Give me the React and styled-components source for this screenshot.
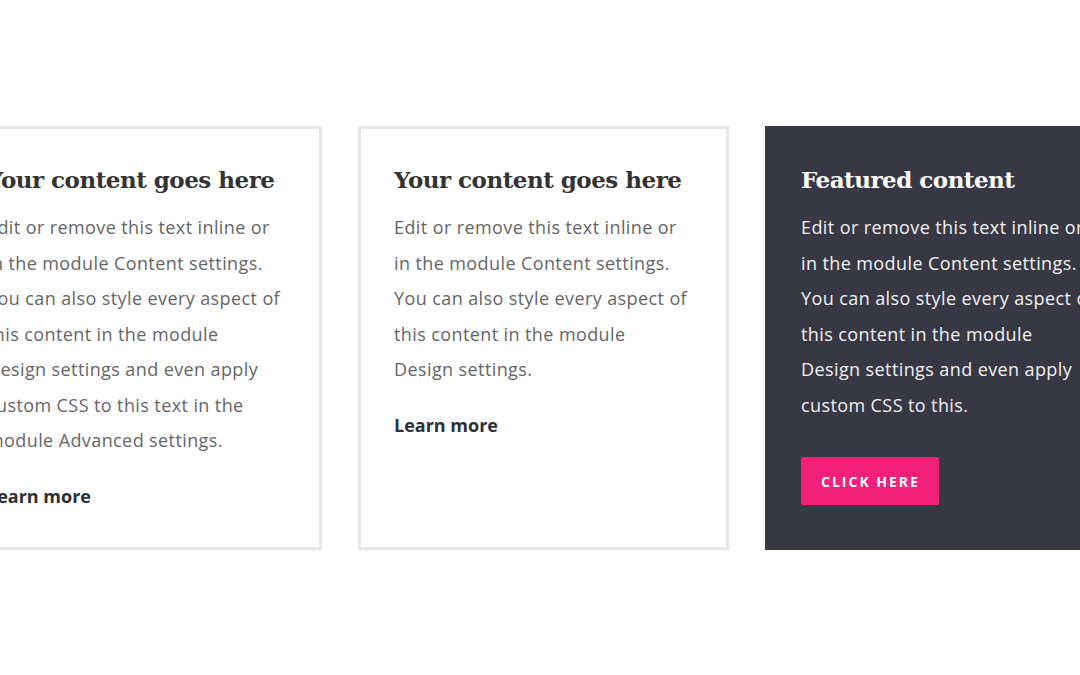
import React from "react";
import styled, { createGlobalStyle } from "styled-components";

const GlobalStyle = createGlobalStyle`
  html, body {
    margin: 0;
    padding: 0;
    background: #ffffff;
    overflow: hidden;
  }
`;

const Page = styled.div`
  width: 1080px;
  height: 675px;
  overflow: hidden;
  padding-top: 126px;
  box-sizing: border-box;
`;

const Row = styled.div`
  display: flex;
  align-items: stretch;
  gap: 36px;
  margin-left: -49px;
  width: 1185px;
`;

const Card = styled.div`
  box-sizing: border-box;
  flex: 0 0 371px;
  width: 371px;
  padding: 33px 33px 33px;
  border: 3px solid ${(p) => (p.$dark ? "#373844" : "#e6e6e6")};
  background: ${(p) => (p.$dark ? "#373844" : "#ffffff")};
  display: flex;
  flex-direction: column;
  align-items: flex-start;
`;

const Title = styled.h2`
  margin: 0 0 13px;
  font-family: "DejaVu Serif", serif;
  font-weight: 700;
  font-size: 23px;
  line-height: 35px;
  letter-spacing: -0.5px;
  color: ${(p) => (p.$dark ? "#ffffff" : "#333333")};
  white-space: nowrap;
`;

const Text = styled.p`
  margin: 0;
  font-family: "Open Sans", sans-serif;
  font-size: 18px;
  line-height: 35.5px;
  letter-spacing: 0.4px;
  color: ${(p) => (p.$dark ? "#f2f2f4" : "#666666")};
  white-space: nowrap;
`;

const More = styled.a`
  margin-top: 20px;
  font-family: "Open Sans", sans-serif;
  font-weight: 700;
  font-size: 18px;
  line-height: 35.5px;
  color: #2e2f38;
  text-decoration: none;
`;

const Button = styled.a`
  margin-top: 34px;
  display: inline-flex;
  align-items: center;
  justify-content: center;
  height: 48px;
  padding: 0 19px 0 20px;
  border-radius: 2px;
  background: #f3207a;
  color: #ffffff;
  font-family: "Open Sans", sans-serif;
  font-weight: 700;
  font-size: 14px;
  letter-spacing: 2px;
  text-decoration: none;
`;

const cards = [
  {
    title: "Your content goes here",
    lines: [
      "Edit or remove this text inline or",
      "in the module Content settings.",
      "You can also style every aspect of",
      "this content in the module",
      "Design settings and even apply",
      "custom CSS to this text in the",
      "module Advanced settings.",
    ],
  },
  {
    title: "Your content goes here",
    lines: [
      "Edit or remove this text inline or",
      "in the module Content settings.",
      "You can also style every aspect of",
      "this content in the module",
      "Design settings.",
    ],
  },
  {
    title: "Featured content",
    dark: true,
    lines: [
      "Edit or remove this text inline or",
      "in the module Content settings.",
      "You can also style every aspect of",
      "this content in the module",
      "Design settings and even apply",
      "custom CSS to this.",
    ],
  },
];

export default function App() {
  return (
    <Page>
      <GlobalStyle />
      <Row>
        {cards.map((c, i) => (
          <Card key={i} $dark={c.dark}>
            <Title $dark={c.dark}>{c.title}</Title>
            <Text $dark={c.dark}>
              {c.lines.map((l, j) => (
                <React.Fragment key={j}>
                  {l}
                  {j < c.lines.length - 1 && <br />}
                </React.Fragment>
              ))}
            </Text>
            {c.dark ? (
              <Button href="#">CLICK HERE</Button>
            ) : (
              <More href="#">Learn more</More>
            )}
          </Card>
        ))}
      </Row>
    </Page>
  );
}
